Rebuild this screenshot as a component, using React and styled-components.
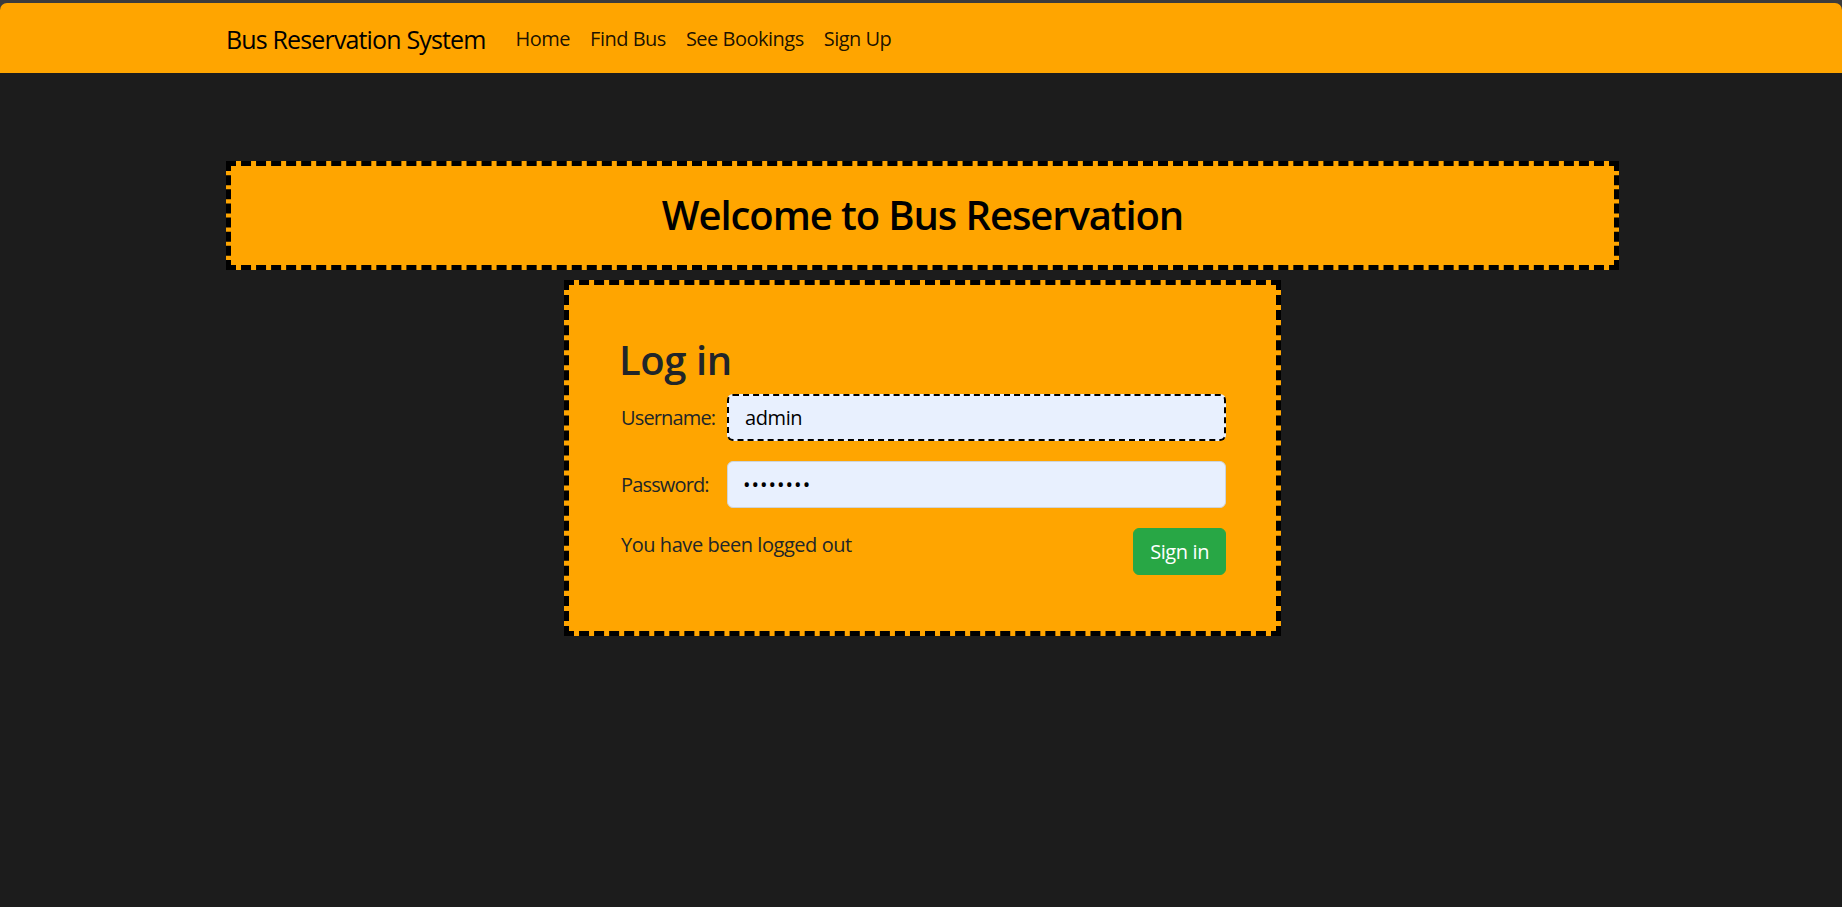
import React from "react";
import styled, { createGlobalStyle } from "styled-components";

const GlobalStyle = createGlobalStyle`
  html, body {
    margin: 0;
    background: #1c1c1c;
  }
  body {
    font-family: "Open Sans", "Noto Sans", sans-serif;
    color: #212529;
  }
  * {
    box-sizing: border-box;
  }
`;

const Page = styled.div`
  min-height: 100vh;
  background: #1c1c1c;
`;

// thin window edge above the navbar
const NavShell = styled.div`
  background: #3c3c3c;
  padding-top: 3px;
`;

const Navbar = styled.nav`
  background: #ffa500;
  height: 70px;
  padding-top: 2px;
  border-radius: 7px 7px 0 0;
  display: flex;
  align-items: center;
`;

const Container = styled.div`
  width: 1393px;
  margin-left: calc(50% - 695px);
  display: flex;
  flex-direction: ${(p) => (p.column ? "column" : "row")};
  align-items: center;
`;

const Brand = styled.a`
  font-size: 25px;
  line-height: 37px;
  color: #000;
  letter-spacing: -0.85px;
  margin-right: 20px;
  text-decoration: none;
`;

const NavLinks = styled.ul`
  display: flex;
  list-style: none;
  margin: 0;
  padding: 0;
`;

const NavLink = styled.a`
  display: block;
  padding: 10px;
  font-size: 20px;
  line-height: 30px;
  color: rgba(0, 0, 0, 0.9);
  letter-spacing: -0.5px;
  text-decoration: none;
`;

const Main = styled.main`
  padding-top: 88px;
`;

const Banner = styled.div`
  width: 100%;
  background: #ffa500;
  border: 5px dashed #000;
  padding: 25px 0 26px;
  text-align: center;
`;

const BannerTitle = styled.h2`
  margin: 0;
  font-size: 40px;
  line-height: 48px;
  font-weight: 600;
  color: #000;
  letter-spacing: -1.1px;
`;

const Card = styled.div`
  width: 717px;
  margin-top: 10px;
  background: #ffa500;
  border: 5px dashed #000;
  padding: 51px 50px 56px;
`;

const CardTitle = styled.h2`
  margin: 0 0 10px;
  font-size: 40px;
  line-height: 48px;
  font-weight: 600;
  color: #212529;
  letter-spacing: -0.4px;
`;

const FormRow = styled.div`
  display: grid;
  grid-template-columns: 108px 1fr;
  align-items: center;
  margin-bottom: 20px;
`;

const Label = styled.label`
  font-size: 20px;
  line-height: 30px;
  color: #212529;
  letter-spacing: -0.85px;
  padding-left: 2px;
`;

const Input = styled.input`
  width: 100%;
  height: 47px;
  padding: 0 15px 0 ${(p) => (p.focused ? "16px" : "15px")};
  font-family: inherit;
  font-size: 20px;
  color: #000;
  background: #e8f0fe;
  border: ${(p) => (p.focused ? "2px dashed #000" : "1px solid #ced4da")};
  border-radius: 6px;
  outline: none;
  letter-spacing: ${(p) => (p.type === "password" ? "1px" : "-0.4px")};
`;

const Footer = styled.div`
  display: flex;
  justify-content: space-between;
  align-items: flex-start;
`;

const Status = styled.p`
  margin: 0;
  padding: 2px 0 0 2px;
  font-size: 20px;
  line-height: 30px;
  color: #212529;
  letter-spacing: -0.45px;
`;

const Button = styled.button`
  height: 47px;
  padding: 0 16px;
  font-family: inherit;
  font-size: 20px;
  color: #fff;
  background: #28a745;
  border: 1px solid #28a745;
  border-radius: 6px;
  letter-spacing: -0.4px;
  cursor: pointer;
`;

const links = ["Home", "Find Bus", "See Bookings", "Sign Up"];

export default function App() {
  return (
    <Page>
      <GlobalStyle />
      <NavShell>
        <Navbar>
          <Container>
            <Brand href="#">Bus Reservation System</Brand>
            <NavLinks>
              {links.map((l) => (
                <li key={l}>
                  <NavLink href="#">{l}</NavLink>
                </li>
              ))}
            </NavLinks>
          </Container>
        </Navbar>
      </NavShell>
      <Main>
        <Container column>
          <Banner>
            <BannerTitle>Welcome to Bus Reservation</BannerTitle>
          </Banner>
          <Card>
            <CardTitle>Log in</CardTitle>
            <FormRow>
              <Label htmlFor="username">Username:</Label>
              <Input id="username" focused defaultValue="admin" />
            </FormRow>
            <FormRow>
              <Label htmlFor="password">Password:</Label>
              <Input id="password" type="password" defaultValue="password" />
            </FormRow>
            <Footer>
              <Status>You have been logged out</Status>
              <Button>Sign in</Button>
            </Footer>
          </Card>
        </Container>
      </Main>
    </Page>
  );
}
